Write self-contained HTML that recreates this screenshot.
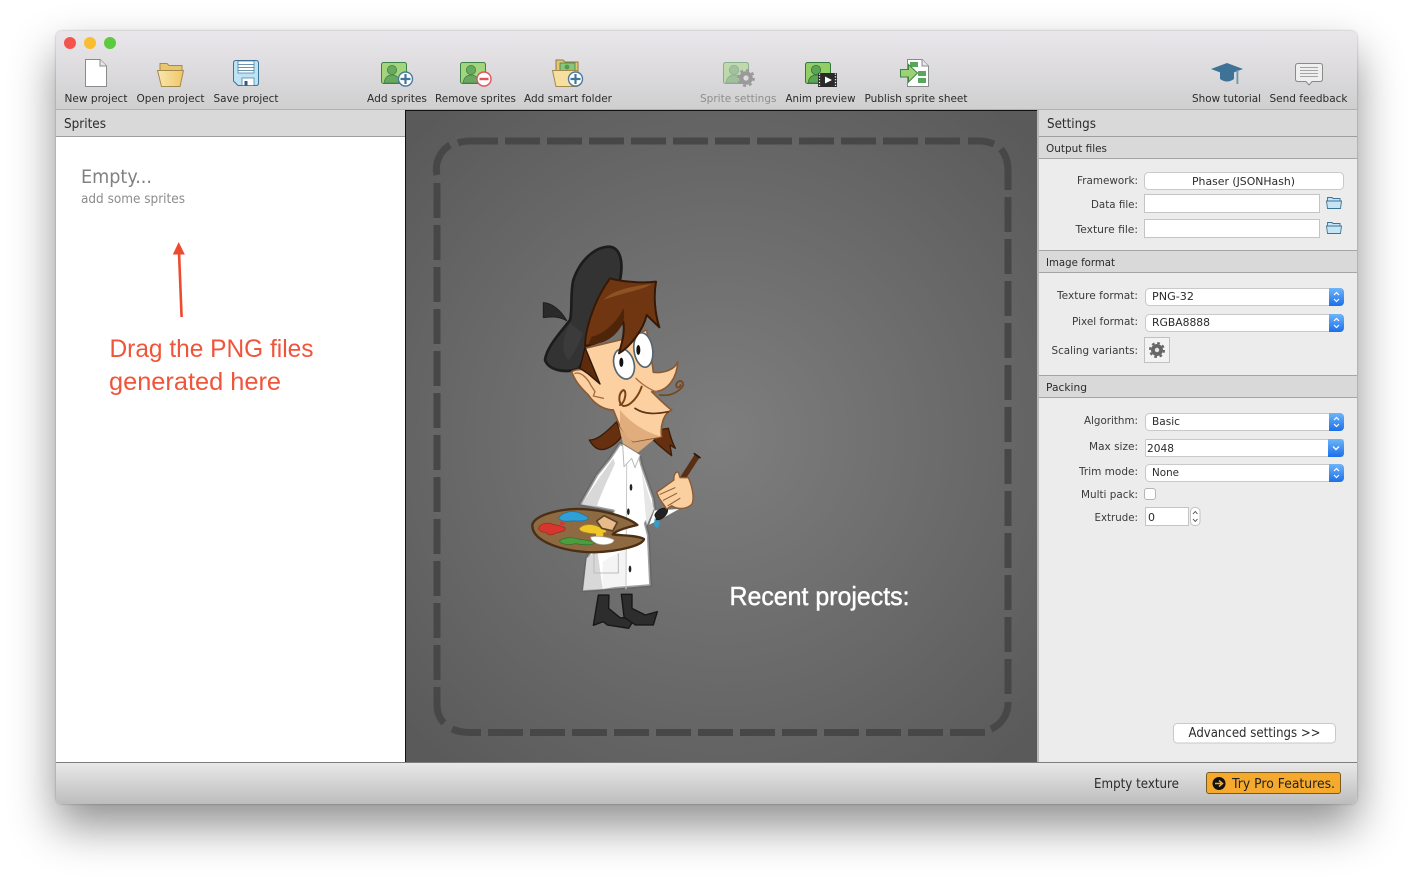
<!DOCTYPE html>
<html lang="en"><head><meta charset="utf-8"><title>TexturePacker</title>
<style>
html,body{margin:0;padding:0;background:#fff;width:1412px;height:884px;overflow:hidden}
#win{position:absolute;left:56px;top:31px;width:1301px;height:773px;border-radius:6px;box-shadow:0 22px 45px rgba(0,0,0,.44),0 0 2px rgba(0,0,0,.3)}
svg{position:absolute;left:0;top:0}
text{font-family:"DejaVu Sans","Liberation Sans",sans-serif;font-size:11px;fill:#2b2b2b}
.t{fill:#3a3a3a}
.l{font-size:13px}
.s{font-family:"Liberation Sans",sans-serif}
</style></head><body>
<div id="win"></div>
<svg width="1412" height="884" viewBox="0 0 1412 884" xmlns="http://www.w3.org/2000/svg">
<defs>
<linearGradient id="tb" x1="0" y1="0" x2="0" y2="1"><stop offset="0" stop-color="#e9e7ea"/><stop offset="1" stop-color="#d0cfd0"/></linearGradient>
<linearGradient id="sb" x1="0" y1="0" x2="0" y2="1"><stop offset="0" stop-color="#e8e8e8"/><stop offset="1" stop-color="#bdbdbd"/></linearGradient>
<linearGradient id="bl" x1="0" y1="0" x2="0" y2="1"><stop offset="0" stop-color="#6db5fb"/><stop offset="1" stop-color="#1c6fe9"/></linearGradient>
<linearGradient id="fo" x1="0" y1="0" x2="1" y2="0"><stop offset="0" stop-color="#f9e6b0"/><stop offset="1" stop-color="#f0c766"/></linearGradient>
<radialGradient id="cg" gradientUnits="userSpaceOnUse" cx="721" cy="436" r="430"><stop offset="0" stop-color="#7e7e7e"/><stop offset="1" stop-color="#5a5a5a"/></radialGradient>
<clipPath id="wc"><rect x="56" y="31" width="1301" height="773" rx="6"/></clipPath>
</defs>
<g clip-path="url(#wc)">
<rect x="56" y="31" width="1301" height="773" fill="#ececec"/>
<rect x="56" y="31" width="1301" height="78" fill="url(#tb)"/>
<rect x="56" y="109" width="1301" height="1" fill="#b0b0b0"/>
<!-- left -->
<rect x="56" y="110" width="349" height="26" fill="#d9d9d9"/>
<rect x="56" y="136" width="349" height="1" fill="#9e9e9e"/>
<rect x="56" y="137" width="349" height="625" fill="#fff"/>
<!-- center -->
<rect x="405" y="110" width="633" height="653" fill="#111"/>
<rect x="406" y="111" width="631" height="651" fill="url(#cg)"/>
<rect x="1037" y="110" width="2" height="653" fill="#b9b9b9"/>
<!-- right -->
<rect x="1039" y="110" width="318" height="26" fill="#d9d9d9"/>
<rect x="1039" y="136" width="318" height="1" fill="#9e9e9e"/>
<rect x="1039" y="137" width="318" height="21" fill="#d9d9d9"/>
<rect x="1039" y="158" width="318" height="1" fill="#a5a5a5"/>
<rect x="1039" y="250" width="318" height="1" fill="#a5a5a5"/>
<rect x="1039" y="251" width="318" height="21" fill="#d9d9d9"/>
<rect x="1039" y="272" width="318" height="1" fill="#a5a5a5"/>
<rect x="1039" y="375" width="318" height="1" fill="#a5a5a5"/>
<rect x="1039" y="376" width="318" height="21" fill="#d9d9d9"/>
<rect x="1039" y="397" width="318" height="1" fill="#a5a5a5"/>
<!-- status -->
<rect x="56" y="762" width="1301" height="1" fill="#7d7d7d"/>
<rect x="56" y="763" width="1301" height="41" fill="url(#sb)"/>
</g>
<!-- traffic lights -->
<circle cx="70" cy="43" r="6" fill="#f5544d"/><circle cx="90" cy="43" r="6" fill="#fabd2f"/><circle cx="110" cy="43" r="6" fill="#5cc93f"/>

<!-- New project -->
<path d="M85.5 59.5H100L106.5 66V86.5H85.5Z" fill="#fff" stroke="#8b8b8b"/><path d="M100 59.5V66H106.5" fill="#e6e6e6" stroke="#8b8b8b"/>
<!-- Open -->
<path d="M160 70V63.5H167L169 65.5H182V72H160Z" fill="#e9c570" stroke="#a58b4b"/>
<path d="M157.5 70.5H183.5L180 86.5H161.5Z" fill="url(#fo)" stroke="#a58b4b"/>
<!-- Save -->
<path d="M236 60.5H256Q258.5 60.5 258.5 63V83Q258.5 85.5 256 85.5H238L233.5 81V63Q233.5 60.5 236 60.5Z" fill="#bde3f6" stroke="#3f7395"/>
<rect x="238" y="61" width="16" height="12" fill="#fff" stroke="#3f7395" stroke-width=".7"/>
<path d="M238 64.5H254M238 67.5H254M238 70.5H254" stroke="#3f7395" stroke-width=".8"/>
<rect x="242" y="78" width="12" height="7.5" fill="#fff" stroke="#3f7395" stroke-width=".7"/><rect x="244.5" y="81" width="3" height="4.5" fill="#2f5f80"/>

<!-- Add sprites -->
<rect x="381.5" y="62.5" width="25" height="21" rx="2" fill="#a3d57c" stroke="#3e8246"/>
<circle cx="392" cy="70" r="4.6" fill="#69a95f" stroke="#3e8246" stroke-width=".8"/><path d="M384 83C385 77 388 75 392 75C396 75 399 77 400 83Z" fill="#69a95f" stroke="#3e8246" stroke-width=".8"/>
<circle cx="405.5" cy="79" r="7" fill="#fff" stroke="#4a7a9e" stroke-width="1.4"/><path d="M400.5 79H410.5M405.5 74V84" stroke="#43749a" stroke-width="2.2"/>
<!-- Remove sprites -->
<rect x="460.5" y="62.5" width="25" height="21" rx="2" fill="#a3d57c" stroke="#3e8246"/>
<circle cx="471" cy="70" r="4.6" fill="#69a95f" stroke="#3e8246" stroke-width=".8"/><path d="M463 83C464 77 467 75 471 75C475 75 478 77 479 83Z" fill="#69a95f" stroke="#3e8246" stroke-width=".8"/>
<circle cx="484" cy="79" r="7" fill="#fff" stroke="#e3525e" stroke-width="1.4"/><path d="M479.5 79H488.5" stroke="#e3525e" stroke-width="2.4"/>
<!-- Smart folder -->
<path d="M556 70V60H563L565 62H578V72H556Z" fill="#e9c570" stroke="#8c7a45"/>
<rect x="560" y="63" width="15" height="9" fill="#8cc47a" stroke="#3e8246" stroke-width=".8"/><circle cx="567" cy="67" r="2.4" fill="#4f9a55"/>
<path d="M552.5 70.5H578L581 84L577 86.5H556Z" fill="#f6df9f" stroke="#a58b4b"/>
<circle cx="575.5" cy="79" r="7" fill="#fff" stroke="#4a7a9e" stroke-width="1.4"/><path d="M570.5 79H580.5M575.5 74V84" stroke="#43749a" stroke-width="2.2"/>
<!-- Sprite settings -->
<g opacity=".5">
<rect x="723.5" y="62.5" width="25" height="21" rx="2" fill="#a3d57c" stroke="#3e8246"/>
<circle cx="734" cy="70" r="4.6" fill="#69a95f" stroke="#3e8246" stroke-width=".8"/><path d="M726 83C727 77 730 75 734 75C738 75 741 77 742 83Z" fill="#69a95f" stroke="#3e8246" stroke-width=".8"/>
</g>
<circle cx="746" cy="78" r="6.8" fill="#9a9a9a"/><circle cx="746" cy="78" r="7.8" fill="none" stroke="#9a9a9a" stroke-width="2.2" stroke-dasharray="3 3.1"/><circle cx="746" cy="78" r="2.6" fill="#dcdcdc"/>
<!-- Anim -->
<rect x="805.5" y="62.5" width="25" height="21" rx="2" fill="#93cd66" stroke="#347a3c"/>
<circle cx="816" cy="70" r="4.6" fill="#5da556" stroke="#2f7237" stroke-width=".8"/><path d="M808 83C809 77 812 75 816 75C820 75 823 77 824 83Z" fill="#5da556" stroke="#2f7237" stroke-width=".8"/>
<rect x="818" y="73" width="19" height="14" fill="#2a2a2a"/><path d="M825 76.5L832 80L825 83.5Z" fill="#fff"/>
<path d="M835.5 73.5V87M819.5 73.5V87" stroke="#fff" stroke-width="1.3" stroke-dasharray="1.2 1.6"/>
<!-- Publish -->
<path d="M907.5 59.5H922L928.5 66V86.5H907.5Z" fill="#fff" stroke="#8b8b8b"/><path d="M922 59.5V66H928.5" fill="#e6e6e6" stroke="#8b8b8b"/>
<rect x="910" y="62" width="8" height="5" fill="#58a75c"/><rect x="918" y="71" width="8" height="5" fill="#58a75c"/><rect x="918" y="78" width="8" height="5" fill="#58a75c"/>
<path d="M900.5 69.5H908.5V64.5L917.5 73L908.5 82V77H900.5Z" fill="#9dd272" stroke="#3e8246"/>
<!-- Tutorial -->
<path d="M1220 72V79Q1227 84 1234 79V72Z" fill="#3e7397"/>
<path d="M1227 63L1243 69L1227 75L1211 69Z" fill="#3e7397"/>
<rect x="1236.5" y="70" width="1.8" height="14" fill="#6c97b3"/>
<!-- Feedback -->
<path d="M1298 63.5H1320Q1322.5 63.5 1322.5 66V79Q1322.5 81.5 1320 81.5H1312L1309 85L1306 81.5H1298Q1295.5 81.5 1295.5 79V66Q1295.5 63.5 1298 63.5Z" fill="#efefef" stroke="#8a8a8a"/>
<path d="M1300 67.5H1318M1300 70.5H1318M1300 73.5H1318M1300 76.5H1318" stroke="#8a8a8a" stroke-width=".8"/>

<!-- Toolbar labels -->
<text x="64.5" y="102" textLength="63" lengthAdjust="spacingAndGlyphs">New project</text>
<text x="136.5" y="102" textLength="68" lengthAdjust="spacingAndGlyphs">Open project</text>
<text x="213.5" y="102" textLength="65" lengthAdjust="spacingAndGlyphs">Save project</text>
<text x="367" y="102" textLength="60" lengthAdjust="spacingAndGlyphs">Add sprites</text>
<text x="435" y="102" textLength="81" lengthAdjust="spacingAndGlyphs">Remove sprites</text>
<text x="524" y="102" textLength="88" lengthAdjust="spacingAndGlyphs">Add smart folder</text>
<text x="700" y="102" textLength="76.5" lengthAdjust="spacingAndGlyphs" style="fill:#8e8e8e">Sprite settings</text>
<text x="785.5" y="102" textLength="70" lengthAdjust="spacingAndGlyphs">Anim preview</text>
<text x="864.5" y="102" textLength="103" lengthAdjust="spacingAndGlyphs">Publish sprite sheet</text>
<text x="1192" y="102" textLength="69" lengthAdjust="spacingAndGlyphs">Show tutorial</text>
<text x="1269.5" y="102" textLength="78" lengthAdjust="spacingAndGlyphs">Send feedback</text>

<!-- Left panel -->
<text class="l" x="64" y="128" textLength="42" lengthAdjust="spacingAndGlyphs">Sprites</text>
<text x="81" y="183" style="font-size:19px;fill:#808080" textLength="71" lengthAdjust="spacingAndGlyphs">Empty...</text>
<text x="81" y="203" style="font-size:13px;fill:#8c8c8c" textLength="104" lengthAdjust="spacingAndGlyphs">add some sprites</text>
<path d="M181.6 317L179 252" stroke="#ee4a2e" stroke-width="2.6" fill="none"/>
<path d="M178.7 242L184.8 254.5H172.8Z" fill="#ee4a2e"/>
<text class="s" x="109.5" y="357" style="font-size:25px;fill:#ef553a" textLength="204" lengthAdjust="spacingAndGlyphs">Drag the PNG files</text>
<text class="s" x="109" y="390" style="font-size:25px;fill:#ef553a" textLength="172" lengthAdjust="spacingAndGlyphs">generated here</text>

<!-- Dashed drop zone -->
<g fill="none" stroke="#474747" stroke-width="7">
<path d="M505 141H961" stroke-dasharray="35 7"/>
<path d="M458 143Q463 141 470 141H498"/>
<path d="M450 145A28 28 0 0 0 437 175"/>
<path d="M968 141H980Q986 141 994 144"/>
<path d="M1001 149Q1008 158 1008 170V190"/>
<path d="M1008 197V694" stroke-dasharray="35 7"/>
<path d="M1008 702A28 28 0 0 1 991 729"/>
<path d="M985 732.5H488" stroke-dasharray="35 7"/>
<path d="M437 183V680" stroke-dasharray="35 7"/>
<path d="M437 687V704Q437 716 444 723"/>
<path d="M452 729Q460 732.5 470 732.5H481"/>
</g>

<!-- Character -->
<g transform="translate(520,240) scale(.33333)" stroke-linejoin="round" stroke-linecap="round">
<!-- hat -->
<path d="M70 188C100 190 125 215 140 242C115 228 90 230 70 233Z" fill="#2a2a2b" stroke="#1e1e1e" stroke-width="3"/>
<path d="M268 20C225 20 180 60 160 120C150 160 158 210 150 240C120 280 80 320 75 360C85 390 135 402 178 385L215 300L300 120C312 60 298 22 268 20Z" fill="#333334" stroke="#1c1c1c" stroke-width="8"/>
<path d="M150 250C130 290 120 330 145 360C165 340 180 300 190 280Z" fill="#3b3b3c"/>
<g transform="translate(0,585)">
<!-- hair locks -->
<path d="M208 15C230 18 260 -10 290 -40L305 5C290 25 260 50 235 42C225 38 215 28 208 15Z" fill="#663010" stroke="#3a1c06" stroke-width="4"/>
<path d="M415 -15L445 -20C450 0 458 25 466 40L450 30L455 62C440 50 420 35 400 15Z" fill="#663010" stroke="#3a1c06" stroke-width="4"/>
<path d="M295 -30L420 -10L400 15L345 60L310 30Z" fill="#d8a87a"/>
<!-- coat -->
<path d="M300 25L270 70L230 120L180 208L280 228L200 370L188 468L392 452L385 300L376 265L405 225L400 190L365 90L358 60Z" fill="#fff" stroke="#5f5f5f" stroke-opacity=".6" stroke-width="9"/>
<path d="M280 70L240 125L185 208L230 215C245 170 270 120 285 85ZM200 370L190 465L248 462L232 345Z" fill="#d8d8d8"/>
<path d="M248 380V462L320 450V340Z" fill="#f4f4f4"/>
<path d="M222 356V414H295V356" fill="none" stroke="#bbb" stroke-width="3"/>
<path d="M362 90C370 130 385 180 402 222L380 272C375 230 372 150 362 90Z" fill="#e6e6e6"/>
<path d="M320 90L318 462" stroke="#c9c9c9" stroke-width="3"/>
<path d="M308 28L312 95L335 70L345 98L360 60" fill="#fff" stroke="#bcbcbc" stroke-width="3"/>
<ellipse cx="333" cy="157" rx="4" ry="10" fill="#222"/><ellipse cx="325" cy="230" rx="4" ry="10" fill="#222"/><ellipse cx="330" cy="402" rx="4" ry="10" fill="#222"/>
<!-- cuff + brush tip -->
<path d="M402 225L484 220L430 250L385 272Z" fill="#fff" stroke="#777" stroke-width="3"/>
<path d="M404 250L402 272L413 280L420 262Z" fill="#2e9fd0"/>
<path d="M404 240C412 222 430 215 443 222C445 240 425 255 410 255Z" fill="#222" stroke="#111" stroke-width="2"/>
<!-- brush -->
<path d="M485 135L532 62" stroke="#5a2e12" stroke-width="17" stroke-linecap="butt"/>
<path d="M523 56L540 68" stroke="#2a1608" stroke-width="5"/>
<!-- hand -->
<path d="M410 172L462 135C460 120 468 108 475 112L480 128L505 128C515 150 525 190 515 208C500 222 475 225 455 212L440 222L418 190Z" fill="#fbd0a0" stroke="#8b5a32" stroke-width="4"/>
<path d="M420 178L465 158M430 196L470 175M444 212L480 190" stroke="#8b5a32" stroke-width="3" fill="none"/>
<!-- palette -->
<path d="M37 270C40 240 130 215 210 224C270 230 330 250 352 270C330 275 290 285 278 298C300 302 350 300 372 312C370 330 300 350 220 352C130 350 35 320 37 270Z" fill="#8e6a42" stroke="#4a2f14" stroke-width="7"/>
<path d="M115 248C130 232 150 226 175 232C190 240 205 242 205 252C190 262 170 256 150 258C135 260 120 258 115 248Z" fill="#2f9fd6" stroke="#1f6f9a" stroke-width="2"/>
<path d="M55 280C60 268 75 262 90 265C100 270 120 270 135 278C140 290 115 292 105 295C95 302 85 302 78 292C68 292 58 290 55 280Z" fill="#d9352f" stroke="#8f2a20" stroke-width="2"/>
<rect x="120" y="261" width="14" height="9" rx="3" fill="#d9352f"/>
<path d="M178 280C190 266 215 266 235 275C250 280 262 285 258 292C240 298 215 298 195 292C185 290 178 286 178 280Z" fill="#f1c728" stroke="#a9871a" stroke-width="2"/>
<rect x="228" y="294" width="22" height="10" rx="4" fill="#f1c728"/>
<path d="M118 318C130 308 155 305 175 312C190 315 215 316 225 324C210 334 185 328 165 326C150 330 125 330 118 318Z" fill="#4a9e3f" stroke="#2f6e2a" stroke-width="2"/>
<path d="M212 306C230 302 265 305 282 315C280 328 250 332 232 326C222 322 212 316 212 306Z" fill="#fff" stroke="#b8b0a0" stroke-width="2"/>
<path d="M230 258L252 242L292 262L278 288L245 280Z" fill="#e8bb8a" stroke="#5c4326" stroke-width="5"/>
<!-- boots -->
<path d="M235 480H267L266 520L300 548L345 550L326 580L262 570L250 560L220 571Z" fill="#2d2d2e" stroke="#161616" stroke-width="4"/>
<path d="M304 478H336L336 520L376 540L412 530L400 570L346 570L312 546Z" fill="#2d2d2e" stroke="#161616" stroke-width="4"/>
</g>
<!-- face -->
<path d="M195 325L300 300L380 270L398 380L400 397C430 400 465 390 473 365C472 410 445 458 395 455C420 480 440 500 455 510C430 520 420 560 425 590L340 605L300 560L280 510C255 510 225 495 205 465C185 445 165 425 155 395C170 385 195 388 210 395Z" fill="#fcd0a1" stroke="#8a5a35" stroke-width="5"/>
<path d="M165 400C180 395 200 410 212 435L225 455L220 468L250 475" fill="none" stroke="#a56d40" stroke-width="4"/>
<path d="M300 560C320 590 330 600 340 605L425 590C405 585 345 565 300 510Z" fill="#e2ad7c"/>
<!-- sideburn -->
<path d="M195 322L240 432L205 402L180 385Z" fill="#5e2b0d" stroke="#2a1506" stroke-width="4"/>
<!-- eyes -->
<ellipse cx="312" cy="372" rx="30" ry="46" transform="rotate(-15 312 372)" fill="#fff" stroke="#55666e" stroke-width="5"/>
<ellipse cx="370" cy="330" rx="28" ry="52" transform="rotate(-8 370 330)" fill="#fff" stroke="#55666e" stroke-width="5"/>
<ellipse cx="304" cy="367" rx="6" ry="14" fill="#111"/><ellipse cx="355" cy="330" rx="6" ry="15" fill="#111"/>
<!-- nose crease + curls -->
<path d="M348 415C362 430 390 450 410 455" fill="none" stroke="#a56d40" stroke-width="4"/>
<path d="M365 440C355 470 330 500 310 498C293 490 295 460 310 450C322 452 315 490 300 495" fill="none" stroke="#7a4516" stroke-width="6"/>
<path d="M420 465C450 470 480 455 490 435C490 420 472 418 468 435C470 448 480 442 482 435" fill="none" stroke="#7a4516" stroke-width="5"/>
<path d="M345 505C375 525 410 522 445 515" fill="none" stroke="#5c3417" stroke-width="5"/>
<!-- front hair -->
<path d="M270 115C300 125 370 130 408 125C400 170 405 220 418 262L380 225C370 270 330 320 297 340C305 310 315 280 310 245C280 290 240 310 195 318C195 280 215 190 270 115Z" fill="#6f3611" stroke="#351905" stroke-width="6"/>
<path d="M250 180C280 150 330 140 395 132C370 150 300 160 250 180Z" fill="#8f5222"/>
<path d="M215 290C245 285 290 250 310 205C320 240 300 275 270 295C250 310 225 312 205 314Z" fill="#4f2509"/>
</g>

<text class="s" x="729.5" y="605" style="font-size:26px;fill:#fff;stroke:#fff;stroke-width:.45" textLength="180" lengthAdjust="spacingAndGlyphs">Recent projects:</text>

<!-- Settings -->
<text class="l" x="1047" y="128" textLength="49" lengthAdjust="spacingAndGlyphs">Settings</text>
<text x="1046" y="152" textLength="61" lengthAdjust="spacingAndGlyphs">Output files</text>
<text x="1046" y="266" textLength="69" lengthAdjust="spacingAndGlyphs">Image format</text>
<text x="1046" y="391" textLength="41" lengthAdjust="spacingAndGlyphs">Packing</text>

<text class="t" x="1077" y="184" textLength="61" lengthAdjust="spacingAndGlyphs">Framework:</text>
<text class="t" x="1091" y="208" textLength="47" lengthAdjust="spacingAndGlyphs">Data file:</text>
<text class="t" x="1075.5" y="233" textLength="62.5" lengthAdjust="spacingAndGlyphs">Texture file:</text>
<text class="t" x="1057" y="299" textLength="81" lengthAdjust="spacingAndGlyphs">Texture format:</text>
<text class="t" x="1072" y="325" textLength="66" lengthAdjust="spacingAndGlyphs">Pixel format:</text>
<text class="t" x="1051.5" y="354" textLength="86.5" lengthAdjust="spacingAndGlyphs">Scaling variants:</text>
<text class="t" x="1084" y="424" textLength="54" lengthAdjust="spacingAndGlyphs">Algorithm:</text>
<text class="t" x="1089" y="450" textLength="49" lengthAdjust="spacingAndGlyphs">Max size:</text>
<text class="t" x="1079" y="475" textLength="59" lengthAdjust="spacingAndGlyphs">Trim mode:</text>
<text class="t" x="1081" y="498" textLength="57" lengthAdjust="spacingAndGlyphs">Multi pack:</text>
<text class="t" x="1094.5" y="521" textLength="43.5" lengthAdjust="spacingAndGlyphs">Extrude:</text>

<rect x="1144.5" y="172.5" width="199" height="17" rx="4" fill="#fff" stroke="#c9c9c9"/>
<text x="1192" y="185" textLength="103" lengthAdjust="spacingAndGlyphs">Phaser (JSONHash)</text>
<rect x="1144.5" y="194.5" width="175" height="18" fill="#fff" stroke="#c4c4c4"/>
<rect x="1144.5" y="219.5" width="175" height="18" fill="#fff" stroke="#c4c4c4"/>
<path d="M1327.5 201V197.5H1332L1333 198.5H1340V201Z M1326.5 201H1341.5L1340.5 208.5H1327.5Z" fill="#c5e5f5" stroke="#3f7395" stroke-width=".9"/>
<path d="M1327.5 226V222.5H1332L1333 223.5H1340V226Z M1326.5 226H1341.5L1340.5 233.5H1327.5Z" fill="#c5e5f5" stroke="#3f7395" stroke-width=".9"/>

<!-- selects -->
<rect x="1145.5" y="288.5" width="198" height="17" rx="4" fill="#fff" stroke="#c9c9c9"/>
<path d="M1329 288H1340A4 4 0 0 1 1344 292V302A4 4 0 0 1 1340 306H1329Z" fill="url(#bl)"/>
<path d="M1334 295L1336.5 292.5L1339 295M1334 299L1336.5 301.5L1339 299" fill="none" stroke="#fff" stroke-width="1.2"/>
<text x="1152" y="300" textLength="42" lengthAdjust="spacingAndGlyphs">PNG-32</text>

<rect x="1145.5" y="314.5" width="198" height="17" rx="4" fill="#fff" stroke="#c9c9c9"/>
<path d="M1329 314H1340A4 4 0 0 1 1344 318V328A4 4 0 0 1 1340 332H1329Z" fill="url(#bl)"/>
<path d="M1334 321L1336.5 318.5L1339 321M1334 325L1336.5 327.5L1339 325" fill="none" stroke="#fff" stroke-width="1.2"/>
<text x="1152" y="326" textLength="58" lengthAdjust="spacingAndGlyphs">RGBA8888</text>

<rect x="1144.5" y="337.5" width="25" height="25" fill="#f3f3f3" stroke="#c0c0c0"/>
<circle cx="1157" cy="350" r="6" fill="#666"/><circle cx="1157" cy="350" r="7" fill="none" stroke="#666" stroke-width="2" stroke-dasharray="2.75 2.75"/><circle cx="1157" cy="350" r="2.2" fill="#e8e8e8"/>

<rect x="1145.5" y="413.5" width="198" height="17" rx="4" fill="#fff" stroke="#c9c9c9"/>
<path d="M1329 413H1340A4 4 0 0 1 1344 417V427A4 4 0 0 1 1340 431H1329Z" fill="url(#bl)"/>
<path d="M1334 420L1336.5 417.5L1339 420M1334 424L1336.5 426.5L1339 424" fill="none" stroke="#fff" stroke-width="1.2"/>
<text x="1152" y="425" textLength="28" lengthAdjust="spacingAndGlyphs">Basic</text>

<rect x="1145.5" y="439.5" width="198" height="17" rx="1" fill="#fff" stroke="#c9c9c9"/>
<path d="M1328 439H1340A4 4 0 0 1 1344 443V453A4 4 0 0 1 1340 457H1328Z" fill="url(#bl)"/>
<path d="M1333 446.5L1336 449.5L1339 446.5" fill="none" stroke="#fff" stroke-width="1.4"/>
<text x="1147" y="452" textLength="27" lengthAdjust="spacingAndGlyphs">2048</text>

<rect x="1145.5" y="464.5" width="198" height="17" rx="4" fill="#fff" stroke="#c9c9c9"/>
<path d="M1329 464H1340A4 4 0 0 1 1344 468V478A4 4 0 0 1 1340 482H1329Z" fill="url(#bl)"/>
<path d="M1334 471L1336.5 468.5L1339 471M1334 475L1336.5 477.5L1339 475" fill="none" stroke="#fff" stroke-width="1.2"/>
<text x="1152" y="476" textLength="27" lengthAdjust="spacingAndGlyphs">None</text>

<rect x="1144.5" y="488.5" width="11" height="11" rx="2.5" fill="#fff" stroke="#b5b5b5"/>
<rect x="1145.5" y="507.5" width="43" height="18" fill="#fff" stroke="#c4c4c4"/>
<text x="1148" y="521">0</text>
<rect x="1190.5" y="507.5" width="9.5" height="18" rx="4" fill="#fff" stroke="#c4c4c4"/>
<path d="M1193 514L1195.25 511.5L1197.5 514M1193 519L1195.25 521.5L1197.5 519" fill="none" stroke="#444" stroke-width=".9"/>

<rect x="1173.5" y="723.5" width="162" height="19.5" rx="4" fill="#fff" stroke="#c9c9c9"/>
<text class="l" x="1188.5" y="737" textLength="132" lengthAdjust="spacingAndGlyphs">Advanced settings &gt;&gt;</text>

<text class="l" x="1094" y="788" textLength="85" lengthAdjust="spacingAndGlyphs">Empty texture</text>
<rect x="1206.5" y="772.5" width="134" height="21" rx="2.5" fill="#f5aa2e" stroke="#7a5a20"/>
<circle cx="1219" cy="783.5" r="6.5" fill="#111"/>
<path d="M1215 783.5H1221M1219 780.5L1222.5 783.5L1219 786.5" fill="none" stroke="#f5aa2e" stroke-width="1.5"/>
<text class="l" x="1232" y="788" textLength="103" lengthAdjust="spacingAndGlyphs" style="fill:#222">Try Pro Features.</text>
</svg>
</body></html>
